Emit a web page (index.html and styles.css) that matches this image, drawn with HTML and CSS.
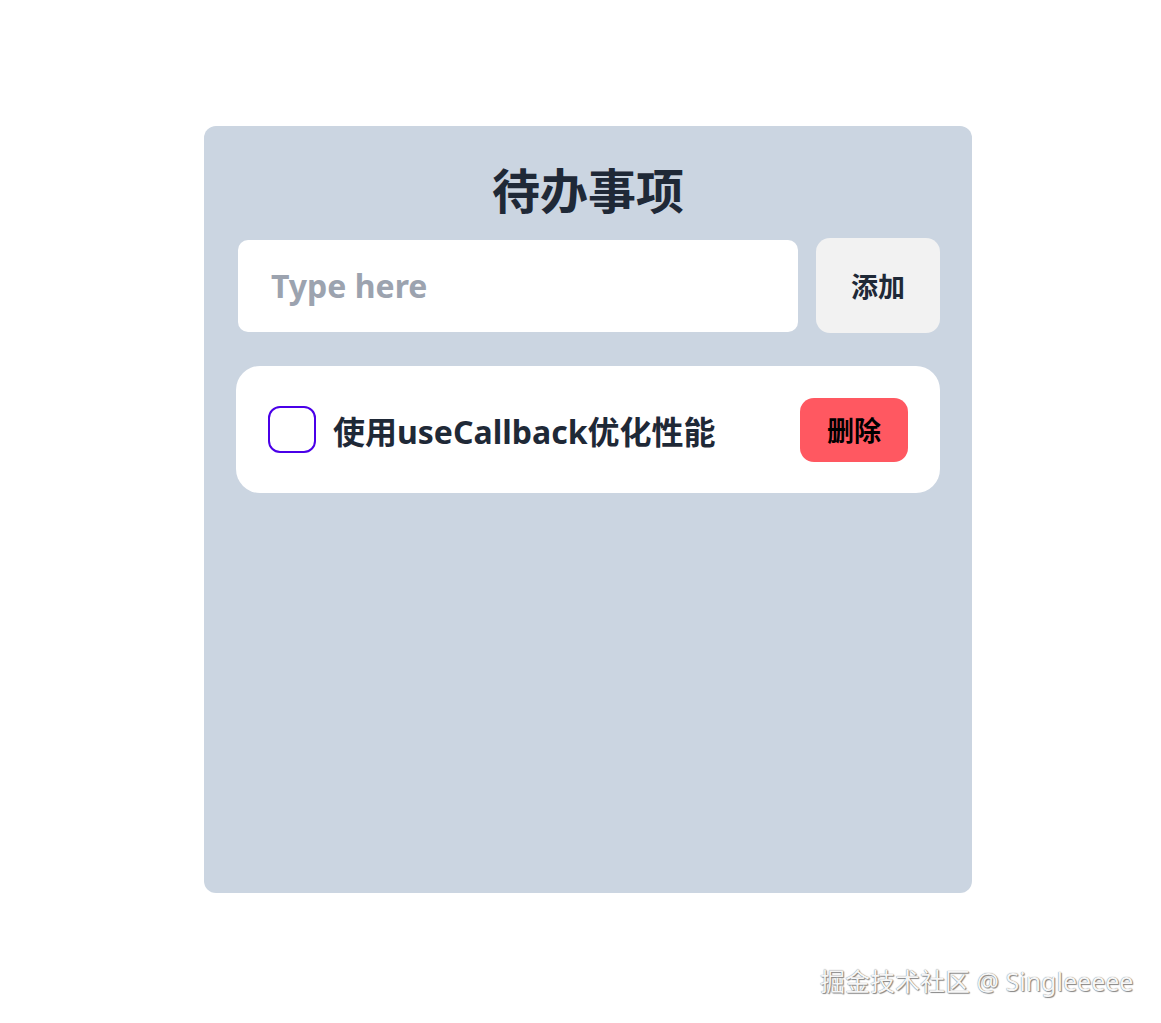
FILE: index.html
```html
<!DOCTYPE html>
<html lang="zh">
<head>
<meta charset="utf-8">
<link rel="stylesheet" href="styles.css">
</head>
<body>
<div class="page">
  <div class="card">
    <h1 class="title">待办事项</h1>
    <div class="form">
      <input class="input" type="text" placeholder="Type here">
      <button class="add">添加</button>
    </div>
    <div class="item">
      <span class="check"></span>
      <span class="text">使用useCallback优化性能</span>
      <button class="del">删除</button>
    </div>
  </div>
</div>
<div class="mark">掘金技术社区 @ Singleeeee</div>
</body>
</html>
```
FILE: styles.css
```css
html, body {
  margin: 0;
  padding: 0;
  background: #ffffff;
  font-family: "Noto Sans", "Noto Sans CJK SC", sans-serif;
}
.page {
  width: 1161px;
  height: 1023px;
  padding: 126px 0 0 204px;
  box-sizing: border-box;
  display: flex;
  align-items: flex-start;
}
.card {
  width: 768px;
  height: 767px;
  background: #cbd5e1;
  border-radius: 12px;
  padding: 0 32px 0 32px;
  box-sizing: border-box;
  display: flex;
  flex-direction: column;
}
.title {
  margin: 35px 0 0 0;
  height: 77px;
  line-height: 54px;
  font-size: 48px;
  font-weight: 700;
  color: #1f2937;
  text-align: center;
  font-family: "Noto Sans CJK SC", sans-serif;
}
.form {
  display: flex;
  align-items: center;
  gap: 18px;
  padding-left: 2px;
  height: 95px;
}
.input {
  width: 560px;
  height: 92px;
  border: none;
  border-radius: 10px;
  background: #ffffff;
  padding: 0 33px;
  box-sizing: border-box;
  font-size: 32px;
  font-weight: 700;
  font-family: "Noto Sans", "Noto Sans CJK SC", sans-serif;
  color: #1f2937;
  outline: none;
}
.input::placeholder {
  color: #9ca3af;
}
.add {
  width: 124px;
  height: 95px;
  border: none;
  border-radius: 14px;
  background: #f2f2f2;
  font-size: 27px;
  font-weight: 700;
  color: #1f2937;
  font-family: "Noto Sans CJK SC", sans-serif;
  padding: 0;
}
.item {
  margin-top: 33px;
  height: 127px;
  background: #ffffff;
  border-radius: 24px;
  display: flex;
  align-items: center;
  padding: 0 32px;
  box-sizing: border-box;
}
.check {
  width: 48px;
  height: 47px;
  box-sizing: border-box;
  border: 2px solid #4a00e8;
  border-radius: 12px;
  flex: none;
}
.text {
  margin-left: 17px;
  flex: 1;
  font-size: 32px;
  font-weight: 700;
  color: #1f2937;
  font-family: "Noto Sans", "Noto Sans CJK SC", sans-serif;
}
.del {
  width: 108px;
  height: 64px;
  border: none;
  border-radius: 14px;
  background: #ff5861;
  font-size: 27px;
  font-weight: 700;
  color: #000000;
  font-family: "Noto Sans CJK SC", sans-serif;
  padding: 0;
}
.mark {
  position: absolute;
  left: 820px;
  top: 962px;
  font-size: 25px;
  color: #f6f6f6;
  font-family: "Noto Sans", "Noto Sans CJK SC", sans-serif;
  text-shadow: 0 0 1px #666, 1px 1px 1px #888;
  white-space: nowrap;
}
```
